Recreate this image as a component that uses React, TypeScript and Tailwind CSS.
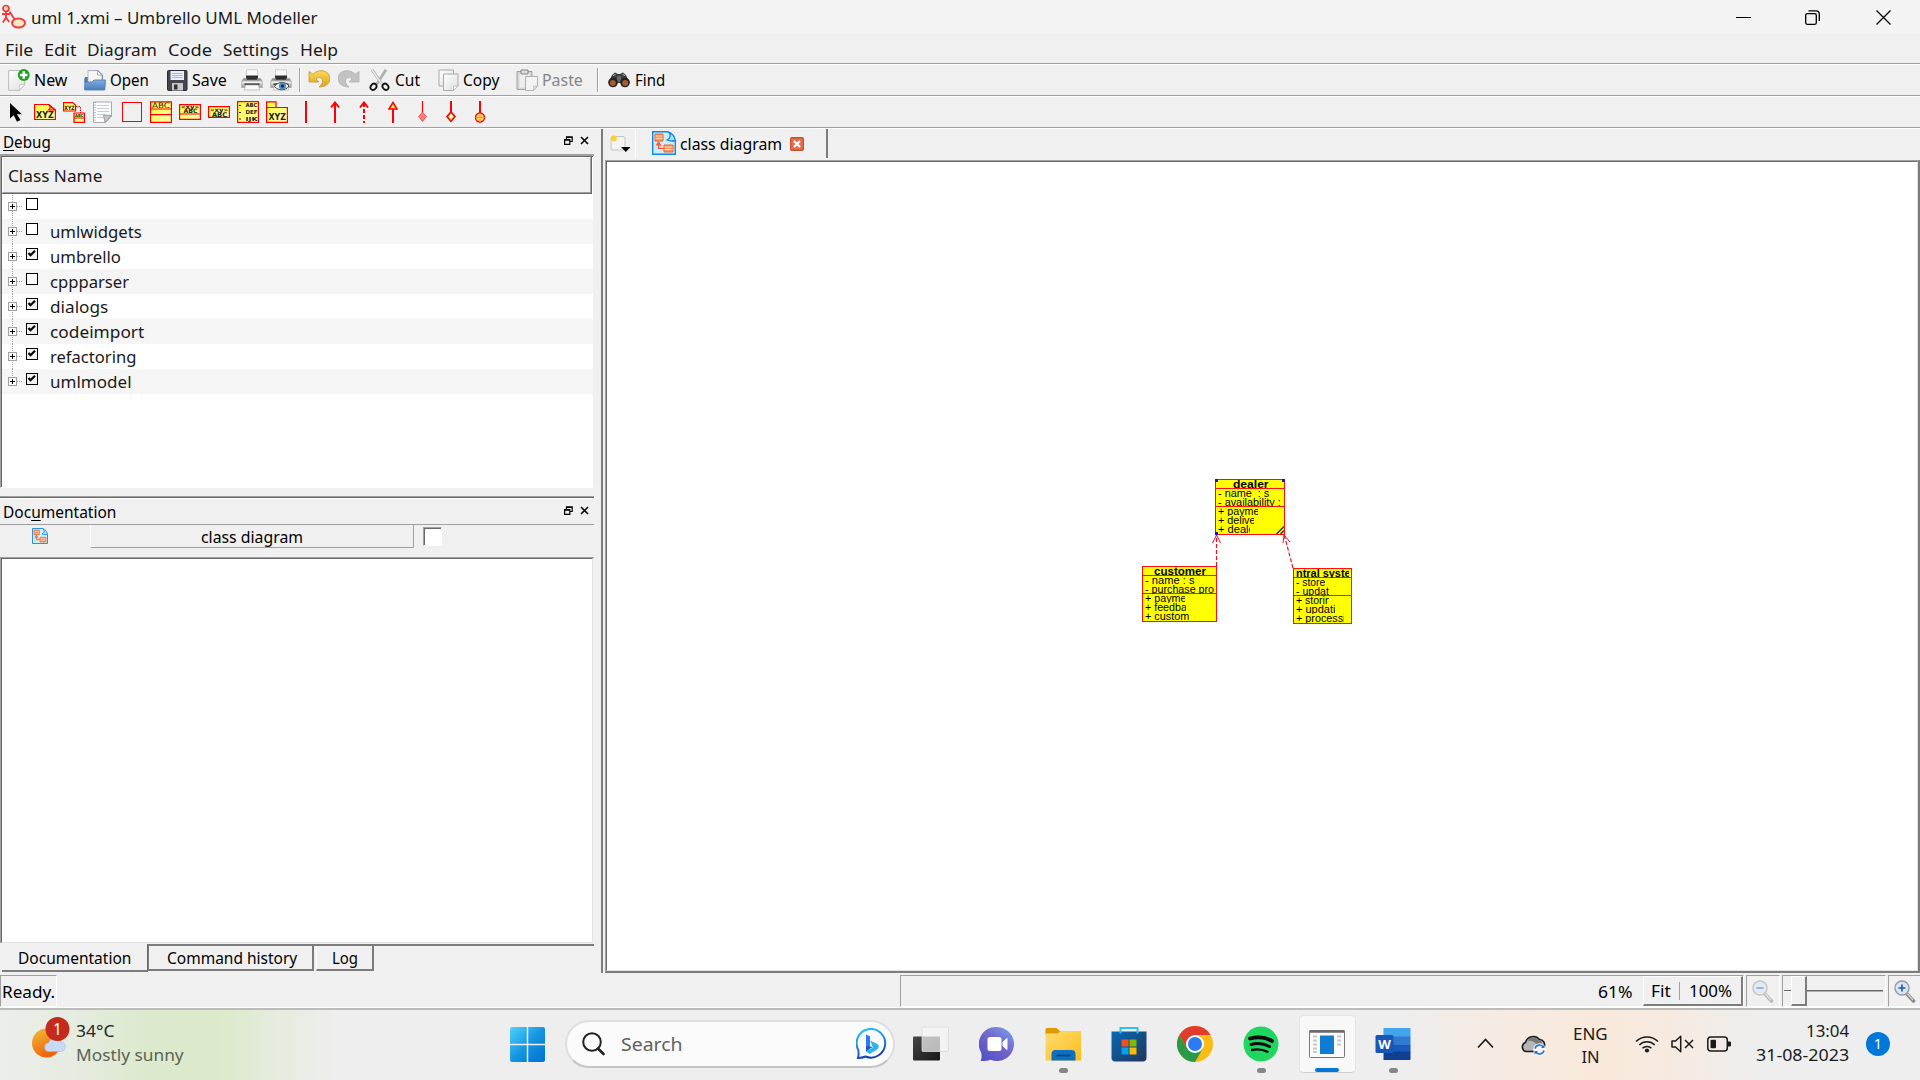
import React, { useLayoutEffect, useRef, useState } from "react";

/** Single line of text stretched or squeezed horizontally to the width `w`. */
function Fit({ t, w, c = "", children }: { t?: string; w: number; c?: string; children?: React.ReactNode }) {
  const ref = useRef<HTMLSpanElement>(null);
  const [k, setK] = useState(1);
  useLayoutEffect(() => {
    if (ref.current) setK(w / ref.current.offsetWidth);
  }, [w, t]);
  return (
    <span className={`block shrink-0 ${c}`} style={{ width: w }}>
      <span ref={ref} className="inline-block origin-left whitespace-pre" style={{ transform: `scaleX(${k})` }}>
        {children ?? t}
      </span>
    </span>
  );
}

type P = { c?: string; children?: React.ReactNode; v?: string };
const Ic = ({ c = "h-[22px] w-[22px]", v = "0 0 22 22", children }: P) => (
  <svg className={`block shrink-0 ${c}`} viewBox={v} fill="none">
    {children}
  </svg>
);
const Sep = ({ c = "" }: { c?: string }) => (
  <div className={`h-6 w-[2px] shrink-0 border-l border-r border-l-[#a0a0a0] border-r-white ${c}`} />
);

function Defs() {
  return (
    <svg className="absolute h-0 w-0">
      <defs>
        <linearGradient id="yel" x1="0" y1="0" x2="1" y2="1">
          <stop offset="0" stopColor="#ffff30" />
          <stop offset="1" stopColor="#fffdb8" />
        </linearGradient>
        <linearGradient id="pap" x1="0" y1="0" x2="1" y2="1">
          <stop offset="0" stopColor="#ffffff" />
          <stop offset="1" stopColor="#dedede" />
        </linearGradient>
        <linearGradient id="fold" x1="0" y1="0" x2="0" y2="1">
          <stop offset="0" stopColor="#8fb5e0" />
          <stop offset="1" stopColor="#4a7dbd" />
        </linearGradient>
        <linearGradient id="prn" x1="0" y1="0" x2="0" y2="1">
          <stop offset="0" stopColor="#777" />
          <stop offset="0.5" stopColor="#ddd" />
          <stop offset="1" stopColor="#999" />
        </linearGradient>
        <linearGradient id="win" x1="0" y1="0" x2="1" y2="1">
          <stop offset="0" stopColor="#4fd3fe" />
          <stop offset="0.5" stopColor="#1795e0" />
          <stop offset="1" stopColor="#0070d0" />
        </linearGradient>
        <linearGradient id="bing" x1="0" y1="0" x2="0.3" y2="1">
          <stop offset="0" stopColor="#27c8f0" />
          <stop offset="0.6" stopColor="#2583e6" />
          <stop offset="1" stopColor="#173fb5" />
        </linearGradient>
        <linearGradient id="chat" x1="1" y1="0" x2="0.2" y2="1">
          <stop offset="0" stopColor="#79a5f5" />
          <stop offset="0.5" stopColor="#7367c9" />
          <stop offset="1" stopColor="#5352c4" />
        </linearGradient>
        <linearGradient id="exp" x1="0" y1="0" x2="1" y2="1">
          <stop offset="0" stopColor="#ffdd70" />
          <stop offset="1" stopColor="#fbbd1e" />
        </linearGradient>
        <linearGradient id="store" x1="0" y1="0" x2="1" y2="1">
          <stop offset="0" stopColor="#0669b5" />
          <stop offset="1" stopColor="#25355c" />
        </linearGradient>
        <linearGradient id="sun" x1="0" y1="0" x2="0.5" y2="1">
          <stop offset="0" stopColor="#f2bd35" />
          <stop offset="1" stopColor="#f0600c" />
        </linearGradient>
        <linearGradient id="tv" x1="0" y1="0" x2="1" y2="1">
          <stop offset="0" stopColor="#454545" />
          <stop offset="1" stopColor="#181818" />
        </linearGradient>
        <linearGradient id="undo" x1="0" y1="0" x2="0" y2="1">
          <stop offset="0" stopColor="#fbd95e" />
          <stop offset="1" stopColor="#dda21b" />
        </linearGradient>
      </defs>
    </svg>
  );
}

const DiagramIcon = ({ c }: { c: string }) => (
  <Ic c={c} v="0 0 24 24">
    <path d="M.7.7H16l7.300 7v15.600H.7z" fill="#c9effc" />
    <path d="M16 .7c3 2.500 2.500 7-1.500 9 3.500 1 7 .5 8.800 0V8z" fill="#f0f0f0" />
    <path d="M16 .7H.7v22.600h22.600V9.500" stroke="#1287e6" strokeWidth="1.400" />
    <path d="M16 .7c3.500 2.500 2.500 6.500-1 8.300 3 1.200 6.500 1 8.300.5C23 6 20 2 16 .7z" fill="#a8e2fa" stroke="#1287e6" strokeWidth="1.300" />
    <path d="M3 3h8v7H3zM12 14h9v7h-9z" fill="#fb9a66" stroke="#e8642f" strokeWidth="1" />
    <path d="M3.500 5h7M12.500 16h8M3.500 7.500h7M12.500 18.500h8" stroke="#ffd0a8" />
    <path d="M6.500 10.500v7H12M4.500 14l2-3 2 3z" stroke="#ee5a4a" strokeWidth="1.200" fill="#ffc58a" />
  </Ic>
);

const Printer = () => (
  <>
    <path d="M5.500 .8h11v8h-11z" fill="#fafafa" stroke="#c4c4c4" strokeWidth=".8" />
    <path d="M5 6.500h12v4.500H5z" fill="#2e2e2e" />
    <path d="M2.500 9.500h3v1.500h11V9.500h3l1.800 3V18.500H.7v-6z" fill="url(#prn)" stroke="#999" strokeWidth=".6" />
    <path d="M1.500 12.500h19v1.500h-19z" fill="#f0f0f0" />
    <path d="M3.500 15.200h15" stroke="#333" strokeWidth="1.600" />
    <path d="M4.500 16h13l1 5H3.500z" fill="#fafafa" stroke="#aaa" strokeWidth=".7" />
  </>
);

const FloatClose = () => (
  <div className="ml-auto flex items-start gap-[7px] pt-[1px]">
    <Ic c="h-[9px] w-[9px]" v="0 0 9 9">
      <path d="M2.500 3V.8h5.700v4.700H6M2.500 1.300h5.700" stroke="#000" strokeWidth="1.200" />
      <path d="M.6 3.600h5.200v4.700H.6zM.6 4.200h5.200" stroke="#000" strokeWidth="1.200" />
    </Ic>
    <Ic c="h-[9px] w-[9px]" v="0 0 9 9">
      <path d="M1 1l7 7M8 1L1 8" stroke="#000" strokeWidth="1.600" />
    </Ic>
  </div>
);

function TitleBar() {
  return (
    <div className="flex h-[34px] shrink-0 items-center bg-[#f3f3f3]">
      <Ic c="ml-[2px] h-[26px] w-[24px] -mt-[1px]" v="0 0 24 26">
        <circle cx="4" cy="4.500" r="3" fill="#ffd9b0" stroke="#f7383c" strokeWidth="1.700" />
        <path d="M4 8v5.500M0 10h8M4 13.500L.8 18.500M4 13.500l3.200 4.500M7.500 7.500L13 16" stroke="#f7383c" strokeWidth="1.800" />
        <ellipse cx="16.500" cy="19" rx="6.500" ry="4.600" fill="#ffeec4" stroke="#f7383c" strokeWidth="2" />
      </Ic>
      <Fit c="ml-[5px] mt-[1px] text-[16.500px] leading-[34px] text-[#1a1a1a]" w={287} t="uml 1.xmi – Umbrello UML Modeller" />
      <div className="ml-auto flex items-center pr-[29px]">
        <div className="h-px w-[15px] bg-black" />
        <Ic c="ml-[54px] h-[15px] w-[15px]" v="0 0 15 15">
          <rect x=".7" y="3.700" width="10.600" height="10.600" rx="1.500" stroke="#000" strokeWidth="1.300" />
          <path d="M3.500.8H11c2 0 3.300 1.200 3.300 3.300V11" stroke="#000" strokeWidth="1.300" />
        </Ic>
        <Ic c="ml-[56px] h-[15px] w-[15px]" v="0 0 15 15">
          <path d="M.5.5l14 14M14.500.5l-14 14" stroke="#000" strokeWidth="1.300" />
        </Ic>
      </div>
    </div>
  );
}

function MenuBar() {
  const items: [string, number][] = [
    ["File", 28],
    ["Edit", 32],
    ["Diagram", 70],
    ["Code", 44],
    ["Settings", 66],
    ["Help", 38],
  ];
  return (
    <div className="h-[31px] shrink-0 border-b border-b-white">
      <div className="flex h-[30px] gap-[11px] border-b border-b-[#a0a0a0] pl-[5px] pt-[1px]">
        {items.map(([t, w]) => (
          <Fit key={t} t={t} w={w} c="text-[17px] leading-[30px] text-[#1a1a1a]" />
        ))}
      </div>
    </div>
  );
}

const tb = "text-[15.500px] leading-[29px]";

function MainToolbar() {
  return (
    <div className="h-[32px] shrink-0 border-b border-b-white">
      <div className="flex h-[31px] items-center border-b border-b-[#a0a0a0]">
        <Ic c="ml-[8px] h-[22px] w-[22px]">
          <path d="M.7 1.500h16v14l-5 5.800H.7z" fill="url(#pap)" stroke="#b9b9b9" />
          <path d="M16.700 15.500h-5v5.800z" fill="#fff" stroke="#b9b9b9" strokeWidth=".7" />
          <circle cx="15.800" cy="6" r="5.900" fill="#1fa01f" />
          <path d="M15.800 2.300v7.400M12.100 6h7.400" stroke="#fff" strokeWidth="2.500" />
        </Ic>
        <Fit c={`ml-[4px] ${tb}`} w={33} t="New" />
        <Ic c="ml-[17px] h-[22px] w-[22px]">
          <path d="M1 8h4V1h9l5 5v12H1z" fill="#4e7ab1" />
          <path d="M4 1.500h9.500l4.500 4.500v8H4z" fill="#f5f5f5" stroke="#aaa" strokeWidth=".8" />
          <path d="M13.500 1.500V6H18z" fill="#fff" stroke="#999" strokeWidth=".8" />
          <path d="M1 9l-.5 12h20.300L21.500 11H10L8 13H1z" fill="url(#fold)" stroke="#4678b6" strokeWidth=".8" />
        </Ic>
        <Fit c={`ml-[4px] ${tb}`} w={39} t="Open" />
        <Ic c="ml-[18px] h-[21px] w-[21px]" v="0 0 21 21">
          <rect x=".5" y=".5" width="19.500" height="20" rx="1" fill="#45464c" stroke="#2b2b30" />
          <path d="M3.500 1h13.500v9H3.500z" fill="#e9eff8" />
          <path d="M5 3.500h10.500M5 5.500h10.500M5 7.500h10.500" stroke="#a9b9d0" />
          <path d="M5 13h11v7.500H5z" fill="#c8c8cc" />
          <path d="M7 14.500h3.500v5H7z" fill="#333" />
        </Ic>
        <Fit c={`ml-[4px] ${tb}`} w={35} t="Save" />
        <Ic c="ml-[14px] h-[22px] w-[22px]">
          <Printer />
        </Ic>
        <Ic c="ml-[7px] h-[22px] w-[22px]">
          <Printer />
          <path d="M4.500 17.500c4-5.500 11-5 14.500-.5-3.500 5-10.500 5-14.500.5z" fill="#fff" stroke="#444" />
          <circle cx="12.500" cy="17" r="3.600" fill="#4a8cc8" />
          <circle cx="12.500" cy="17" r="1.500" fill="#123" />
        </Ic>
        <Sep c="ml-[7px]" />
        <Ic c="ml-[7px] h-[22px] w-[22px] -mt-[3px]">
          <path d="M1 3.500v10.500h10l-3-3c2.500-2.500 6.500-1.500 6.500 2 0 2-1 4-3.500 6 7 0 11-3.500 11-9C21.500 2.500 11 0 4.800 6.200z" fill="url(#undo)" stroke="#c9951f" strokeWidth=".8" />
        </Ic>
        <Ic c="ml-[8px] h-[22px] w-[22px] -mt-[3px]">
          <path d="M21 3.500v10.500H11l3-3C11.500 8.500 7.500 9.500 7.500 13c0 2 1 4 3.500 6-7 0-11-3.500-11-9C.5 2.500 11 0 17.200 6.200z" fill="#c2c2c2" stroke="#b0b0b0" strokeWidth=".8" />
        </Ic>
        <Ic c="ml-[9px] h-[22px] w-[21px]" v="0 0 21 22">
          <path d="M3 .8l10.500 15M17 .8L7.500 15.500" stroke="#b0b0b0" strokeWidth="2.800" />
          <path d="M3 .8l10.500 15" stroke="#eee" strokeWidth="1.300" />
          <ellipse cx="4.500" cy="17.800" rx="2.700" ry="3.300" transform="rotate(40 4.500 17.800)" stroke="#111" strokeWidth="1.800" />
          <ellipse cx="16.500" cy="17.800" rx="2.700" ry="3.300" transform="rotate(-40 16.500 17.800)" stroke="#111" strokeWidth="1.800" />
        </Ic>
        <Fit c={`ml-[5px] ${tb}`} w={25} t="Cut" />
        <Ic c="ml-[18px] h-[22px] w-[21px]" v="0 0 21 22">
          <path d="M1 1h14.500v16H1z" fill="url(#pap)" stroke="#aaa" />
          <path d="M5.500 5h14.500v12l-4.500 4.500h-10z" fill="url(#pap)" stroke="#aaa" />
          <path d="M20 17h-4.500v4.500z" fill="#fff" stroke="#aaa" strokeWidth=".7" />
        </Ic>
        <Fit c={`ml-[4px] ${tb}`} w={36} t="Copy" />
        <Ic c="ml-[17px] h-[22px] w-[22px]">
          <path d="M1 2.500h15v18H1z" fill="#d5d5d5" stroke="#a0a0a0" />
          <path d="M3.500 4.500h10v14h-10z" fill="#eee" />
          <path d="M5 1h7v4H5z" fill="#ddd" stroke="#888" />
          <path d="M9.500 7.500h12V17l-4 4.500h-8z" fill="#f3f3f3" stroke="#b0b0b0" />
          <path d="M21.500 17h-4v4.500z" fill="#ddd" stroke="#b0b0b0" strokeWidth=".6" />
        </Ic>
        <Fit c={`ml-[4px] text-[#868686] ${tb}`} w={41} t="Paste" />
        <Sep c="ml-[14px]" />
        <Ic c="ml-[9px] h-[16px] w-[22px]" v="0 0 22 16">
          <path d="M4 3l3-2.500 3 1.500h2l3-1.500L18 3l3.700 8H.3z" fill="#3c3c3c" />
          <path d="M9 4h4v6H9z" fill="#666" />
          <circle cx="5" cy="10.500" r="4.800" fill="#222" />
          <circle cx="17" cy="10.500" r="4.800" fill="#222" />
          <circle cx="4.800" cy="11" r="3" fill="#a8592d" />
          <circle cx="17.200" cy="11" r="3" fill="#a8592d" />
          <path d="M5 3.500l2.500-1M14.500 2.500l2.500 1" stroke="#aaa" strokeWidth="1.200" />
        </Ic>
        <Fit c={`ml-[5px] ${tb}`} w={30} t="Find" />
      </div>
    </div>
  );
}

const tiny = { fontFamily: "DejaVu Sans", fontWeight: 700, fill: "#222", lengthAdjust: "spacingAndGlyphs" } as const;

function DiagramToolbar() {
  const R = "#fb0007";
  const icons: React.ReactNode[] = [
    <path key="p" d="M5 2v15.500l3.700-3.200 3.300 6.500 3.500-1.700-3.600-5.800h5z" fill="#000" />,
    <>
      <path d="M.6 3.500h14l6.800 5.500V18.500H.6z" fill="url(#yel)" stroke={R} strokeWidth="1.200" />
      <path d="M14.500 3.500c2.500 1.500 2 4 0 5.500h6.500z" fill="#ffd12a" stroke={R} strokeWidth="1.200" />
      <text x="2" y="16.800" fontSize="9" textLength="18" {...tiny}>XYZ</text>
    </>,
    <>
      <path d="M.6 1.600h9l3 2.500V10H.6z" fill="url(#yel)" stroke={R} strokeWidth="1.200" />
      <text x="1.300" y="8.800" fontSize="6" textLength="10.500" {...tiny}>XYZ</text>
      <path d="M13 5.500h4.500V12" stroke={R} strokeDasharray="1.500 1" />
      <path d="M11 12h10.400v9.400H11zM11 17h10.400" fill="url(#yel)" stroke={R} strokeWidth="1.200" />
      <text x="12" y="16" fontSize="4" textLength="8.500" {...tiny}>ABC</text>
    </>,
    <>
      <path d="M1.500 1h18v14l-6 6.500h-12z" fill="#fbfbfb" stroke="#aaa" />
      <path d="M3 1v20" stroke="#6f8fb5" strokeDasharray="1 1.500" />
      <path d="M5 4.500h12M5 7.500h12M5 10.500h12M5 13.500h8M5 16.500h7" stroke="#c4cfdd" />
      <path d="M19.500 14.500l-8-.500 1.500 7.500z" fill="#c2c5c9" stroke="#888" strokeWidth=".7" />
    </>,
    <rect key="r" x="1.500" y="1.500" width="19" height="19" stroke={R} />,
    <>
      <path d="M.6.8h20.800v20.600H.6zM.6 8h20.800M.6 13.700h20.800" fill="url(#yel)" stroke={R} strokeWidth="1.200" />
      <text x="2" y="7.300" fontSize="7.500" textLength="18" {...tiny} fontWeight={400}>ABC</text>
    </>,
    <>
      <path d="M.6 3.600h20.800v14.800H.6zM.6 13h20.800" fill="url(#yel)" stroke={R} strokeWidth="1.200" />
      <text x="2" y="8" fontSize="6" textLength="18" {...tiny}>«xy»</text>
      <text x="4.500" y="12.300" fontSize="6" textLength="14" {...tiny}>ABC</text>
    </>,
    <>
      <path d="M.6 5.600h20.800v10.800H.6z" fill="url(#yel)" stroke={R} strokeWidth="1.200" />
      <text x="2" y="10.500" fontSize="6" textLength="18" {...tiny}>«xy»</text>
      <text x="4" y="15.800" fontSize="6.500" textLength="15" {...tiny}>ABC</text>
    </>,
    <>
      <rect x=".6" y=".6" width="20.800" height="20.800" fill="url(#yel)" stroke={R} strokeWidth="1.200" />
      <text x="8.500" y="6" fontSize="5.500" textLength="12" {...tiny}>ABC</text>
      <text x="8.500" y="13" fontSize="5.500" textLength="12" {...tiny}>DEF</text>
      <text x="8.500" y="19.500" fontSize="5.500" textLength="12" {...tiny}>IJK</text>
      <path d="M2 4.500h2M2 11.500h2M2 18h2" stroke="#222" />
    </>,
    <>
      <path d="M.6.8h9.400v5.700H.6zM.6 6.500h20.800v14.900H.6z" fill="url(#yel)" stroke={R} strokeWidth="1.200" />
      <text x="2.500" y="18.800" fontSize="9" textLength="17.500" {...tiny}>XYZ</text>
    </>,
    <path key="l" d="M11 0v22" stroke={R} strokeWidth="2" />,
    <path key="a" d="M11 2v20M7 6.500L11 1.500l4 5" stroke={R} strokeWidth="2" />,
    <>
      <path d="M11 2v20" stroke={R} strokeWidth="2" strokeDasharray="4 2" />
      <path d="M7 6.500L11 1.500l4 5" stroke={R} strokeWidth="2" />
    </>,
    <>
      <path d="M11 7v15" stroke={R} strokeWidth="2" />
      <path d="M7 8l4-6.500L15 8z" fill="#ffee30" stroke={R} strokeWidth="1.500" />
    </>,
    <>
      <path d="M11.500 0v12" stroke={R} strokeWidth="1.200" />
      <path d="M11.500 11l3.900 4.700-3.900 4.800-3.900-4.800z" fill="#ff7c7c" stroke="#f85a5a" strokeWidth="1" />
    </>,
    <>
      <path d="M11 0v11" stroke={R} strokeWidth="2" />
      <path d="M11 11l4 4.600-4 4.700-4-4.700z" fill="#ffffa0" stroke={R} strokeWidth="1.700" />
    </>,
    <>
      <path d="M11 0v12" stroke={R} strokeWidth="2" />
      <circle cx="11" cy="16.500" r="4.500" fill="#ffdf60" stroke={R} strokeWidth="1.400" />
      <path d="M11 12v9M6.500 16.500h9" stroke="#ff9040" />
    </>,
  ];
  return (
    <div className="h-[32px] shrink-0 border-b border-b-white">
      <div className="flex h-[31px] items-center gap-[7px] border-b border-b-[#a0a0a0] pl-[5px]">
        {icons.map((n, i) => (
          <Ic key={i}>{n}</Ic>
        ))}
      </div>
    </div>
  );
}

const rows: [string, number, boolean][] = [
  ["", 10, false],
  ["umlwidgets", 92, false],
  ["umbrello", 71, true],
  ["cppparser", 79, false],
  ["dialogs", 58, true],
  ["codeimport", 94, true],
  ["refactoring", 86, true],
  ["umlmodel", 82, true],
];

function LeftDock() {
  return (
    <div className="flex w-[594px] shrink-0 flex-col">
      <div className="flex h-[25px] shrink-0 pl-[3px] pr-[5px] pt-[1px]">
        <Fit c="text-[15.500px] leading-[25px]" w={48} t="Debug">
          <u className="underline-offset-2">D</u>ebug
        </Fit>
        <div className="ml-auto pt-[5px]">
          <FloatClose />
        </div>
      </div>
      <div className="flex h-[334px] shrink-0 flex-col border-b border-l border-t-2 border-[#a0a0a0] border-b-white">
        <div className="mr-[1px] flex grow flex-col border-l border-t border-[#696969] bg-white">
          <div className="mr-[1px] flex h-[37px] shrink-0 border-b border-r border-[#696969]">
            <div className="grow border-b border-l border-r border-t border-b-[#a0a0a0] border-l-white border-r-[#a0a0a0] border-t-white bg-[#f0f0f0] pl-[5px] pt-[1px]">
              <Fit c="text-[17px] leading-[34px] text-[#1a1a1a]" w={94} t="Class Name" />
            </div>
          </div>
          {rows.map(([t, w, on], i) => (
            <div key={i} className={`flex h-[25px] shrink-0 items-start pl-[6px] ${i % 2 ? "bg-[#f5f5f5]" : "bg-white"}`}>
              <Ic c="h-[25px] w-[15px]" v="0 0 15 25">
                <path d={i === 0 ? "M4.500 1v24" : i === 7 ? "M4.500 0v8" : "M4.500 0v25"} stroke="#a0a0a0" strokeDasharray="1 1" />
                <path d="M9 12.500h6" stroke="#a0a0a0" strokeDasharray="1 1" />
                <rect x=".5" y="8.500" width="8" height="8" fill="#fff" stroke="#a0a0a0" />
                <path d="M2 12.500h5M4.500 10v5" stroke="#000" />
              </Ic>
              <div className={`ml-[3px] mt-1 h-3 w-3 border border-black ${on ? "bg-[#f0f0f0]" : "bg-white"}`}>
                {on && (
                  <Ic c="h-[10px] w-[10px]" v="0 0 10 10">
                    <path d="M1.500 4l2 2.200L8 1.800" stroke="#000" strokeWidth="2.200" />
                  </Ic>
                )}
              </div>
              <Fit c="ml-3 text-[16px] leading-[26px] text-[#1a1a1a]" w={w} t={t} />
            </div>
          ))}
        </div>
      </div>
      <div className="h-[8px] shrink-0" />
      <div className="h-[3px] shrink-0 border-b border-t border-b-white border-t-[#a0a0a0] bg-[#696969]" />
      <div className="flex h-[26px] shrink-0 border-b border-b-[#a0a0a0] pl-[3px] pr-[5px]">
        <Fit c="mt-[1px] text-[15.500px] leading-[25px]" w={113} t="Documentation">
          Doc<u className="underline-offset-2">u</u>mentation
        </Fit>
        <div className="ml-auto pt-[6px]">
          <FloatClose />
        </div>
      </div>
      <div className="flex h-[32px] shrink-0 items-start pl-[32px]">
        <DiagramIcon c="mt-[3px] h-4 w-4" />
        <div className="ml-[42px] flex h-[23px] w-[324px] justify-center border-b border-l border-r border-b-[#a0a0a0] border-l-white border-r-[#a0a0a0]">
          <Fit c="mt-[1px] text-[15.500px] leading-[22px]" w={102} t="class diagram" />
        </div>
        <div className="ml-[9px] mt-[2px] h-[19px] w-[19px] border border-[#a0a0a0] border-b-white border-r-white">
          <div className="h-full border-l border-t border-[#696969] bg-white" />
        </div>
      </div>
      <div className="h-[386px] shrink-0 border-l border-t border-[#a0a0a0] pr-[1px]">
        <div className="h-full border-b border-l border-r border-t border-[#696969] border-b-[#e3e3e3] border-r-[#e3e3e3] bg-white" />
      </div>
      <div className="flex h-[30px] shrink-0 items-start pt-[1px]">
        <div className="ml-[2px] h-[28px] w-[146px] border-b-2 border-r border-[#696969] border-b-[#7c7c7c] pl-[16px]">
          <Fit c="text-[15.500px] leading-[28px]" w={113} t="Documentation" />
        </div>
        <div className="h-[26px] grow border-t-2 border-[#7c7c7c]">
          <div className="flex gap-[2px]">
            <div className="h-[25px] w-[166px] border-b-2 border-l border-r-2 border-[#7c7c7c] pl-[18px]">
              <Fit c="text-[15.500px] leading-[24px]" w={130} t="Command history" />
            </div>
            <div className="h-[25px] w-[58px] border-b-2 border-l border-r-2 border-[#7c7c7c] border-l-white pl-[15px]">
              <Fit c="text-[15.500px] leading-[24px]" w={26} t="Log" />
            </div>
          </div>
        </div>
      </div>
    </div>
  );
}

type Row = [string, number, number, number];

/** Class box: title, attribute rows and operation rows. Row = text, left inset, text width, clip width. */
function ClassBox({ pos, title, attrs, ops, sel }: { pos: string; title: Row; attrs: Row[]; ops: Row[]; sel?: boolean }) {
  const line = (r: Row, bold = "") => (
    <div key={r[0]} className="h-[9px] overflow-hidden" style={{ marginLeft: r[1], width: r[3] }}>
      <Fit c={`text-[10px] leading-[10px] text-black ${bold}`} w={r[2]} t={r[0]} />
    </div>
  );
  return (
    <div className={`absolute border border-[#ff1010] bg-[#ffff00] font-['Liberation_Sans',Arial,sans-serif] ${pos}`}>
      <div className="h-[9px] border-b border-[#ff1010]">{line(title, "font-bold")}</div>
      <div className="h-[18px] border-b border-[#ff1010]">{attrs.map((r) => line(r))}</div>
      <div>{ops.map((r) => line(r))}</div>
      {sel && (
        <>
          <div className="absolute -left-px -top-px h-[3px] w-[3px] bg-[#1010ff]" />
          <div className="absolute -right-px -top-px h-[3px] w-[3px] bg-[#1010ff]" />
          <div className="absolute -bottom-px -left-px h-[3px] w-[3px] bg-[#1010ff]" />
          <Ic c="absolute bottom-0 right-0 h-2 w-2" v="0 0 8 8">
            <path d="M.5 8L8 .5M4.500 8L8 4.500" stroke="#222" strokeWidth="1.300" />
          </Ic>
        </>
      )}
    </div>
  );
}

function Canvas() {
  return (
    <div className="relative grow bg-white">
      <ClassBox
        pos="left-[608px] top-[317px] h-[56px] w-[70px]"
        title={["dealer", 17, 35, 37]}
        attrs={[["- name  : s", 2, 51, 60], ["- availability :", 2, 63, 66]]}
        ops={[["+ paymer", 2, 45, 40], ["+ deliver", 2, 41, 36], ["+ dealer", 2, 40, 32]]}
        sel
      />
      <ClassBox
        pos="left-[535px] top-[404px] h-[56px] w-[75px]"
        title={["customer", 11, 52, 54]}
        attrs={[["- name : s", 2, 49, 60], ["- purchase prod", 2, 75, 69]]}
        ops={[["+ paymer", 2, 45, 40], ["+ feedbac", 2, 47, 41], ["+ custome", 2, 50, 44]]}
      />
      <ClassBox
        pos="left-[686px] top-[406px] h-[56px] w-[59px]"
        title={["ntral syster", 2, 59, 53]}
        attrs={[["- stored", 2, 35, 29], ["- update", 2, 39, 33]]}
        ops={[["+ storing", 2, 41, 33], ["+ updatin", 2, 45, 39], ["+ processin", 2, 55, 48]]}
      />
      <svg className="absolute left-[600px] top-[367px] h-[48px] w-[100px]" viewBox="0 0 100 48" fill="none" stroke="#f01020">
        <path d="M9.500 37V6M86 39L77.500 7" strokeDasharray="4 2" strokeWidth="1.200" />
        <path d="M5.500 14l4-8 4 8M76 14l1-8 6 7" />
      </svg>
    </div>
  );
}

function Workspace() {
  return (
    <div className="flex grow flex-col border-l-2 border-[#7c7c7c]">
      <div className="flex h-[31px] shrink-0 items-start">
        <Ic c="ml-[7px] mt-[6px] h-[18px] w-[22px]" v="0 0 22 18">
          <rect x="1" y="1.500" width="14" height="13.500" rx="2" fill="#f4f4f4" stroke="#c4c4c4" />
          <circle cx="3.800" cy="3.500" r="3" fill="#f6cf3a" />
          <path d="M11 12h9.500l-4.700 5z" fill="#000" />
        </Ic>
        <div className="ml-[3px] flex h-[29px] w-[193px] items-start border-l border-r-2 border-l-white border-r-[#7c7c7c]">
          <DiagramIcon c="ml-[16px] mt-[2px] h-6 w-6" />
          <Fit c="ml-[4px] mt-[1px] text-[15.500px] leading-[28px]" w={102} t="class diagram" />
          <Ic c="ml-[8px] mt-[8px] h-[14px] w-[14px]" v="0 0 14 14">
            <rect x=".6" y=".6" width="12.800" height="12.800" rx="1.500" fill="#e0714f" stroke="#cc4a2c" strokeWidth="1.200" />
            <path d="M4 4l6 6M10 4l-6 6" stroke="#fff" strokeWidth="2.200" />
          </Ic>
        </div>
      </div>
      <div className="ml-[2px] flex grow border-b-2 border-l border-r-2 border-t border-[#a0a0a0] border-b-[#7c7c7c] border-r-[#7c7c7c]">
        <div className="flex grow border border-[#696969] border-b-[#e3e3e3] border-r-[#e3e3e3]">
          <Canvas />
        </div>
      </div>
    </div>
  );
}

const Lens = ({ plus }: { plus?: boolean }) => (
  <Ic c={`h-[23px] w-[22px] ${plus ? "" : "opacity-50"}`} v="0 0 22 23">
    <path d="M12.500 13.500l7 7.500" stroke="#8a8a8a" strokeWidth="3.600" strokeLinecap="round" />
    <path d="M13 13.500l6 6.500" stroke="#d5d5d5" strokeWidth="1.200" />
    <circle cx="8" cy="8" r="7" fill="#d6e6fa" stroke="#9a9a9a" strokeWidth="1.400" />
    <path d={plus ? "M4.500 8h7M8 4.500v7" : "M4.500 8h7"} stroke="#2e5c9a" strokeWidth="1.700" />
  </Ic>
);

const well = "border border-[#a0a0a0] border-b-white border-r-white";

function StatusBar() {
  return (
    <div className="flex h-[34px] shrink-0 items-start pt-[2px]">
      <div className={`h-[32px] w-[57px] shrink-0 pl-[1px] ${well}`}>
        <Fit c="text-[16.500px] leading-[31px]" w={53} t="Ready." />
      </div>
      <div className={`ml-[843px] flex h-[32px] w-[844px] shrink-0 ${well}`}>
        <Fit c="ml-[697px] text-[16.500px] leading-[32px]" w={35} t="61%" />
        <div className="ml-[10px] flex h-[30px] w-[100px] items-center border-b-2 border-l border-r-2 border-t border-[#7c7c7c] border-l-white border-t-white">
          <Fit c="ml-[7px] text-[16.500px] leading-[28px]" w={20} t="Fit" />
          <div className="ml-[8px] h-[18px] w-px bg-[#a0a0a0]" />
          <Fit c="ml-[9px] text-[16.500px] leading-[28px]" w={43} t="100%" />
        </div>
      </div>
      <div className={`ml-[2px] flex h-[32px] w-[34px] shrink-0 items-center justify-center ${well}`}>
        <Lens />
      </div>
      <div className={`ml-[2px] flex h-[32px] w-[104px] shrink-0 items-start ${well}`}>
        <div className="ml-[1px] mt-[14px] h-[2px] w-[7px] border-b border-t border-b-white border-t-[#696969]" />
        <div className="h-[30px] w-[16px] border border-b-2 border-r-2 border-[#7c7c7c] border-l-white border-t-white" />
        <div className="mt-[14px] h-[2px] w-[76px] border-b border-t border-b-[#b0b0b0] border-t-[#696969]" />
      </div>
      <div className={`ml-[2px] flex h-[32px] w-[34px] shrink-0 items-center pl-[5px] ${well}`}>
        <Lens plus />
      </div>
    </div>
  );
}

const App36 = ({ dot, children, v = "0 0 36 36" }: P & { dot?: boolean }) => (
  <div className="flex h-full w-[66px] shrink-0 flex-col items-center pt-[16px]">
    <Ic c="h-9 w-9" v={v}>
      {children}
    </Ic>
    {dot && <div className="mt-[6px] h-[5px] w-[9px] rounded-full bg-[#868686]" />}
  </div>
);

const tk = "text-[16.500px] leading-[24px]";

function Taskbar() {
  return (
    <div className="flex h-[73px] shrink-0 flex-col border-t border-t-white bg-[#eeeeee]">
      <div className="flex grow items-start border-t-2 border-[#bbbbbb] bg-[linear-gradient(90deg,#ebeeea_0px,#e6ece1_70px,#dce9cd_150px,#dceaca_220px,#e6ecdf_280px,#eeeeee_340px,#eeeeee_1400px,#f5ebe3_1480px,#f9e9dc_1600px,#f6eae0_1670px,#eeeeee_1760px,#eeeeee_1920px)]">
        <Ic c="ml-[31px] mt-[7px] h-[42px] w-[40px]" v="0 0 40 42">
          <circle cx="15.500" cy="26" r="14.500" fill="url(#sun)" />
          <path d="M17 34.500a4.500 4.500 0 0 1 .5-8.800 7 7 0 0 1 12.500-.5c6 0 5.500 9.300 0 9.300z" fill="#c9daf8" stroke="#9fb9ea" strokeWidth=".6" />
          <circle cx="26.500" cy="12" r="12" fill="#c42b1c" />
          <text x="26.500" y="17.500" fontSize="15.500" fill="#fff" textAnchor="middle" fontFamily="Noto Sans">1</text>
        </Ic>
        <div className="ml-[5px] pt-[9px]">
          <Fit c={`${tk} text-[#1f2a1f]`} w={38} t="34°C" />
          <Fit c={`${tk} text-[#5c6355]`} w={108} t="Mostly sunny" />
        </div>
        <Ic c="ml-[326px] mt-[17px] h-[35px] w-[35px]" v="0 0 35 35">
          <rect width="35" height="35" rx="2" fill="url(#win)" />
          <path d="M17.500 0v35M0 17.500h35" stroke="#e8f4fc" strokeWidth="1.500" />
        </Ic>
        <div className="ml-[20px] mt-[10px] flex h-[48px] w-[330px] items-center rounded-full border-2 border-[#dedede] border-b-[#c4c4c4] bg-[#fbfbfb]">
          <Ic c="ml-[14px] h-[24px] w-[24px]" v="0 0 24 24">
            <circle cx="11" cy="10" r="8.800" stroke="#222" strokeWidth="2" />
            <path d="M17 16.500l5.500 5.500" stroke="#222" strokeWidth="2.600" strokeLinecap="round" />
          </Ic>
          <Fit c="ml-[16px] text-[18.500px] leading-[42px] text-[#606060]" w={62} t="Search" />
          <Ic c="ml-[173px] h-[32px] w-[32px]" v="0 0 32 32">
            <path d="M2 30c.8-3 .8-5 .3-8A14.300 14.300 0 1 1 9.500 28.500C7 29.800 4.500 29.800 2 30z" stroke="url(#bing)" strokeWidth="2" />
            <path d="M10 6.500l4 1.800v12.500l-4 3z" fill="#2a7cf0" />
            <path d="M14 12.500l7.500 3.500c2 1.500 1.500 4-.5 5.500l-7.500 4.500-3.500-2.500 7-4z" fill="#25b9e8" />
            <path d="M10 23l4-2.500 3-1.500-7-1z" fill="#1a55d8" />
          </Ic>
        </div>
        <div className="ml-[3px] flex h-[70px]">
          <App36>
            <rect x="0" y="10.500" width="27" height="24" rx="1" fill="url(#tv)" />
            <rect x="9" y="1" width="26.500" height="24.500" rx="1" fill="#f5f5f5" fillOpacity=".72" stroke="#d8d8d8" strokeWidth=".8" />
          </App36>
          <App36>
            <path d="M18 1a17 17 0 1 1-6.500 32.700C8 35 4.500 35.200 1.500 35c1.500-3 1.200-5.500.7-8.500A17 17 0 0 1 18 1z" fill="url(#chat)" />
            <rect x="8.500" y="11" width="14" height="14" rx="2.500" fill="#fff" />
            <path d="M24 16l4-3.500v11L24 20z" fill="#fff" stroke="#fff" strokeLinejoin="round" />
          </App36>
          <App36 dot>
            <path d="M.5 3.500C.5 2.500 1 2 2 2h9.500l4 3.500V9H.5z" fill="#dd9b00" />
            <path d="M.5 7.500h12l3.500-2.500h19c1 0 1.500.5 1.500 1.500v26.500c0 1-.5 1.500-1.500 1.500h-33c-1 0-1.500-.5-1.500-1.500z" fill="url(#exp)" />
            <path d="M6.500 34.500V28c0-2.500 1.500-4 4-4h16c2.500 0 4 1.500 4 4v6.500z" fill="#0f6fc0" />
            <path d="M11.500 29.500h14" stroke="#0a4b90" strokeWidth="2" />
          </App36>
          <App36>
            <path d="M.5 5.500h35V32c0 2-1.500 3.500-3.500 3.500H4C2 35.500.5 34 .5 32z" fill="url(#store)" />
            <path d="M10.500 13.500h7v7h-7z" fill="#f25022" />
            <path d="M18.500 13.500h7v7h-7z" fill="#7fba00" />
            <path d="M10.500 21.500h7v7h-7z" fill="#00a4ef" />
            <path d="M18.500 21.500h7v7h-7z" fill="#ffb900" />
            <path d="M9.500 7.500V2h17v5.500" stroke="#2fc0ee" strokeWidth="2" />
          </App36>
          <App36>
            <circle cx="18" cy="18" r="18" fill="#fbbc14" />
            <path d="M18 18L10.200 22.500 2.400 9A18 18 0 0 1 33.600 9H18z" fill="#e33b2e" />
            <path d="M2.400 9A18 18 0 0 0 18 36l7.800-13.500L18 27l-7.800-4.500z" fill="#2a9a49" />
            <circle cx="18" cy="18" r="9" fill="#fff" />
            <circle cx="18" cy="18" r="7" fill="#2d7bf0" />
          </App36>
          <App36 dot>
            <circle cx="18" cy="18" r="17.500" fill="#1fd760" />
            <path d="M7 12.500c7.500-2 15.500-1.300 22 2.500" stroke="#0a0a0a" strokeWidth="3.800" strokeLinecap="round" />
            <path d="M8 18.500c6.500-1.700 13-1 18.500 2" stroke="#0a0a0a" strokeWidth="3" strokeLinecap="round" />
            <path d="M9 24c5.500-1.300 10.500-.7 15.500 1.800" stroke="#0a0a0a" strokeWidth="2.400" strokeLinecap="round" />
          </App36>
          <div className="flex h-full w-[66px] shrink-0 justify-center pt-[5px]">
            <div className="flex h-[58px] w-[57px] flex-col items-center rounded-[5px] border border-[#e4e4e4] border-b-[#d0d0d0] bg-[#f8f8f8]">
              <Ic c="mt-[14px] h-[28px] w-[36px]" v="0 0 36 28">
                <rect x=".5" y=".5" width="35" height="27" rx="1" fill="#fbfbfb" stroke="#777" />
                <path d="M.5 1.500h35" stroke="#6a6a6a" strokeWidth="2.500" />
                <rect x="11" y="5.500" width="14" height="18.500" fill="#0f7bd2" />
                <path d="M4 6.500h4M4 10.500h4M4 14.500h4M4 18.500h4M4 22h4M28 6.500h4M28 10.500h4M28 14.500h4" stroke="#c8c8c8" strokeWidth="2" />
              </Ic>
              <div className="mt-[10px] h-[5px] w-[24px] rounded-full bg-[#0078d7]" />
            </div>
          </div>
          <App36 dot>
            <path d="M8.500 2h26c.6 0 1 .4 1 1v7.500h-27z" fill="#41a5ee" />
            <path d="M8.500 10.200h27v8h-27z" fill="#2b7cd3" />
            <path d="M8.500 18.200h27v7.800h-27z" fill="#185abd" />
            <path d="M8.500 25.500h27V33c0 .6-.4 1-1 1h-26z" fill="#103f91" />
            <rect x=".5" y="9" width="18" height="18" rx="1.500" fill="#1a55b8" />
            <text x="9.500" y="22.500" fontSize="13" fontWeight="700" fill="#fff" textAnchor="middle" fontFamily="Noto Sans">W</text>
          </App36>
        </div>
        <Ic c="ml-[51px] mt-[28px] h-[11px] w-[17px]" v="0 0 17 11">
          <path d="M1 9.500l7.500-8 7.500 8" stroke="#1a1a1a" strokeWidth="1.700" />
        </Ic>
        <Ic c="ml-[27px] mt-[25px] h-[22px] w-[26px]" v="0 0 26 22">
          <path d="M5 16.500A4.700 4.700 0 0 1 4.500 7.500 8 8 0 0 1 18.500 4.500c4 .3 5.500 3.500 5 6.500l-6 5.500z" fill="#b5b5b5" stroke="#1c1c1c" strokeWidth="1.600" />
          <path d="M7 6c4-1 7 1 9 4l5-2c-1-3-3-3-4-3-3-4-9-3-10 1z" fill="#777" />
          <circle cx="18.500" cy="14.500" r="6.300" fill="#f5f5f5" />
          <path d="M14 13.500a4.600 4.600 0 0 1 8.500-1M23 15.500a4.600 4.600 0 0 1-8.500 1" stroke="#1e78cc" strokeWidth="1.600" />
          <path d="M23.500 9.500V13H20zM13.500 19.500V16H17z" fill="#1e78cc" />
        </Ic>
        <div className="ml-[26px] flex w-[35px] flex-col items-center pt-[12px]">
          <Fit c="text-[16.500px] leading-[23px] text-[#1a1a1a]" w={35} t="ENG" />
          <Fit c="text-[16.500px] leading-[23px] text-[#1a1a1a]" w={18} t="IN" />
        </div>
        <Ic c="ml-[27px] mt-[25px] h-[18px] w-[24px]" v="0 0 24 18">
          <path d="M1 6.500a15.500 15.500 0 0 1 22 0M4.300 10a10.800 10.800 0 0 1 15.400 0M7.500 13.300a6.300 6.300 0 0 1 9 0" stroke="#1a1a1a" strokeWidth="1.500" />
          <circle cx="12" cy="15.500" r="2.100" fill="#1a1a1a" />
        </Ic>
        <Ic c="ml-[12px] mt-[25px] h-[18px] w-[23px]" v="0 0 23 18">
          <path d="M1 6h3.500L9.700 1.300v15.400L4.500 12H1z" stroke="#1a1a1a" strokeWidth="1.500" strokeLinejoin="round" />
          <path d="M14 5l8 8M22 5l-8 8" stroke="#1a1a1a" strokeWidth="1.500" />
        </Ic>
        <Ic c="ml-[13px] mt-[26px] h-[16px] w-[25px]" v="0 0 25 16">
          <rect x=".8" y="1" width="19.500" height="14" rx="3" stroke="#1a1a1a" strokeWidth="1.500" />
          <rect x="3.500" y="3.800" width="5.500" height="8.400" rx="1" fill="#1a1a1a" />
          <path d="M21 5.500h1.500c1 0 1.500.5 1.500 1.500v2c0 1-.5 1.500-1.500 1.500H21z" fill="#1a1a1a" />
        </Ic>
        <div className="ml-[24px] flex w-[93px] flex-col items-end pt-[9px]">
          <Fit c={`${tk} text-[#1a1a1a]`} w={43} t="13:04" />
          <Fit c={`${tk} text-[#1a1a1a]`} w={93} t="31-08-2023" />
        </div>
        <div className="ml-[17px] mt-[22px] flex h-6 w-6 items-center justify-center rounded-full bg-[#0078d7] text-[14.500px] text-white">1</div>
      </div>
    </div>
  );
}

export default function App() {
  return (
    <div className="flex h-[1080px] w-[1920px] flex-col overflow-hidden bg-[#f0f0f0] font-['Noto_Sans',sans-serif] text-black">
      <Defs />
      <TitleBar />
      <MenuBar />
      <MainToolbar />
      <DiagramToolbar />
      <div className="flex h-[844px] shrink-0">
        <LeftDock />
        <div className="w-[7px] shrink-0" />
        <Workspace />
      </div>
      <StatusBar />
      <Taskbar />
    </div>
  );
}
